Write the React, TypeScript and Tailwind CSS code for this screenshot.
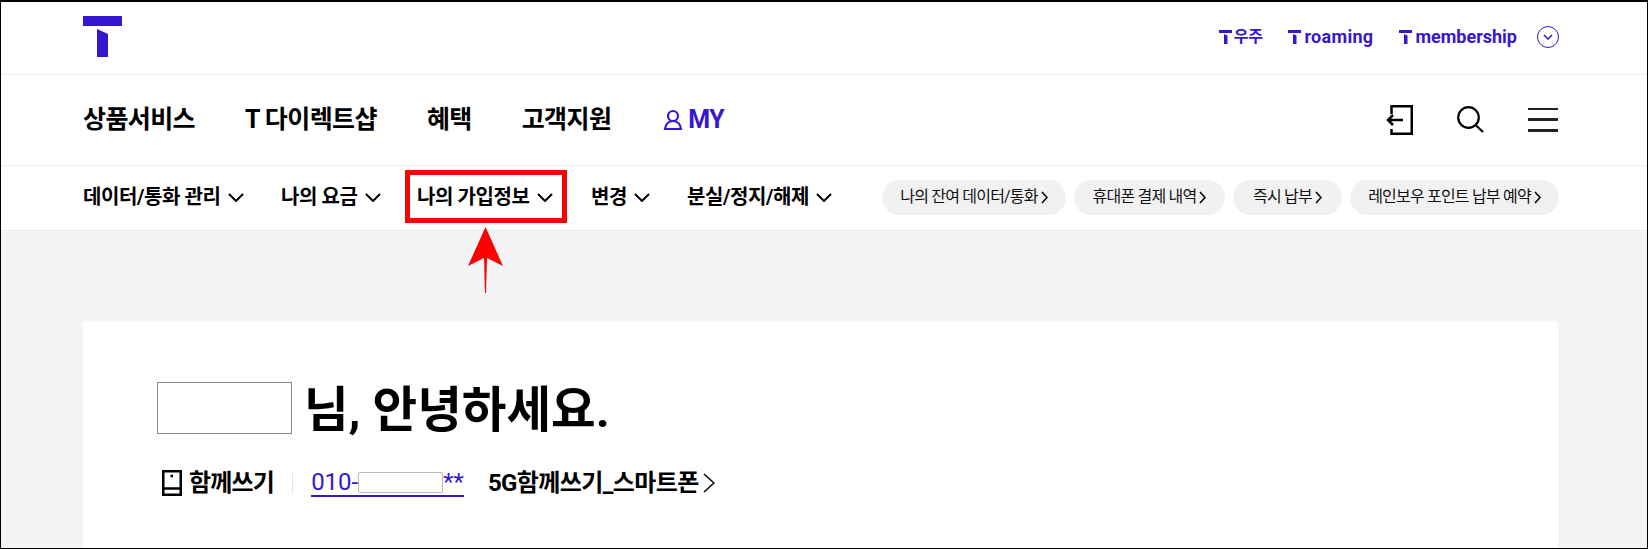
const fontStack = "font-['Roboto','Noto_Sans_CJK_KR',sans-serif]";

const mainNav = ["상품서비스", "T 다이렉트샵", "혜택", "고객지원"];

const subNav = [
  { label: "데이터/통화 관리", width: "w-[198px]" },
  { label: "나의 요금", width: "w-[136px]" },
  { label: "나의 가입정보", width: "w-[174px]" },
  { label: "변경", width: "w-[96px]" },
  { label: "분실/정지/해제", width: "w-auto" },
];

const pills = [
  { label: "나의 잔여 데이터/통화", width: "w-[184px]" },
  { label: "휴대폰 결제 내역", width: "w-[151px]" },
  { label: "즉시 납부", width: "w-[109px]" },
  { label: "레인보우 포인트 납부 예약", width: "w-[209px]" },
];

const TLogo = () => (
  <svg width="40" height="42" viewBox="0 0 40 42" className="block">
    <path d="M0 0H39V10H0Z" fill="#3617ce" />
    <path d="M14 13L25 18V41H14Z" fill="#3617ce" />
  </svg>
);

const MiniT = () => (
  <svg width="13" height="14" viewBox="0 0 13 14" className="shrink-0">
    <path d="M0 0H13V3H0Z" fill="#3617ce" />
    <path d="M5 4L8.500 5.500V14H5Z" fill="#3617ce" />
  </svg>
);

const LoginIcon = () => (
  <svg width="27" height="30" viewBox="0 0 27 30" fill="none" stroke="#000" strokeWidth="2.500" className="block">
    <path d="M5.500 9V1.250H25.750V28.750H5.500V24" />
    <path d="M17 15H2M7 10L2 15L7 20" />
  </svg>
);

const SearchIcon = () => (
  <svg width="27" height="27" viewBox="0 0 27 27" fill="none" stroke="#000" strokeWidth="2.200" className="block">
    <circle cx="11.500" cy="11.500" r="10.300" />
    <path d="M18 18.500L26 26" />
  </svg>
);

const PhoneIcon = () => (
  <svg width="20" height="26" viewBox="0 0 20 26" fill="none" stroke="#000" strokeWidth="2.500" className="block shrink-0">
    <rect x="1.250" y="1.250" width="17.500" height="23.500" />
    <path d="M1 18.500H19" />
    <path d="M8.500 6H11" />
  </svg>
);

const DownChevron = () => (
  <svg width="16" height="9" viewBox="0 0 16 9" fill="none" stroke="#000" strokeWidth="2" className="shrink-0">
    <path d="M1 1L8 8L15 1" />
  </svg>
);

const RightChevron = ({ w, h }: { w: number; h: number }) => (
  <svg width={w} height={h} viewBox={`0 0 ${w} ${h}`} fill="none" stroke="#000" strokeWidth="1.500" className="shrink-0">
    <path d={`M1 1L${w - 1} ${h / 2}L1 ${h - 1}`} />
  </svg>
);

export default function App() {
  return (
    <div className={`${fontStack} relative h-[549px] w-[1648px] overflow-hidden border-2 border-b-[1px] border-black border-r-[1px] border-l-[1px] bg-[#f4f4f6] text-black`}>
      {/* Top bar */}
      <div className="flex h-[73px] items-start justify-between border-b border-[#ededed] bg-white pl-[82px] pr-[88px]">
        <div className="pt-[14px]">
          <TLogo />
        </div>
        <div className="flex items-center gap-[26px] pt-[20px] text-[18px] font-bold leading-[30px] text-[#3617ce]">
          <a className="flex items-center gap-[2px] text-[16px] tracking-[-0.4px]"><MiniT />우주</a>
          <a className="flex items-center gap-[3px] tracking-[0.3px]"><MiniT />roaming</a>
          <a className="flex items-center gap-[3px]"><MiniT />membership</a>
          <span className="-ml-[6px] flex h-[22px] w-[22px] items-center justify-center rounded-full border border-[#3617ce]">
            <svg width="10" height="6" viewBox="0 0 10 6" fill="none" stroke="#3617ce" strokeWidth="1.500">
              <path d="M1 1L5 5L9 1" />
            </svg>
          </span>
        </div>
      </div>

      {/* Main nav */}
      <div className="flex h-[91px] items-center justify-between border-b border-[#ededed] bg-white pb-[1px] pl-[82px] pr-[89px]">
        <div className="flex items-center gap-[50px] text-[25px] font-bold tracking-[-0.6px]">
          {mainNav.map((item) => (
            <span key={item}>{item}</span>
          ))}
          <span className="ml-[2px] flex items-center gap-[5px] text-[#3617ce]">
            <svg width="20" height="22" viewBox="0 0 20 22" fill="none" stroke="#3617ce" strokeWidth="2.200">
              <circle cx="10" cy="7" r="5" />
              <path d="M10 12C5 12 2.500 16 2 20H18C17.500 16 15 12 10 12Z" />
            </svg>
            MY
          </span>
        </div>
        <div className="flex items-center gap-[44px]">
          <LoginIcon />
          <SearchIcon />
          <div className="flex w-[30px] flex-col gap-[8.250px]">
            <div className="h-[2.500px] bg-[#222]" />
            <div className="h-[2.500px] bg-[#222]" />
            <div className="h-[2.500px] bg-[#222]" />
          </div>
        </div>
      </div>

      {/* Sub nav */}
      <div className="flex h-[65px] items-center justify-between border-b border-[#ebebeb] bg-white pb-[2px] pl-[82px] pr-[88px]">
        <div className="flex items-center text-[20px] font-bold tracking-[-0.4px]">
          {subNav.map((item) => (
            <span key={item.label} className={`flex items-center gap-[7px] ${item.width}`}>
              {item.label}
              <DownChevron />
            </span>
          ))}
        </div>
        <div className="flex items-center gap-[8px] text-[16px] tracking-[-0.8px]">
          {pills.map((pill) => (
            <span key={pill.label} className={`flex h-[35px] items-center justify-center gap-[3px] rounded-full bg-[#f1f1f1] text-[#111] ${pill.width}`}>
              {pill.label}
              <RightChevron w={7} h={13} />
            </span>
          ))}
        </div>
      </div>

      {/* Card */}
      <div className="ml-[82px] mr-[89px] mt-[90px] h-[300px] rounded-t-[4px] bg-white pl-[74px] pt-[61px]">
        <div className="flex h-[52px] items-start gap-[12px]">
          <div className="h-[52px] w-[135px] border border-[#8a8a8a] bg-white" />
          <h1 className="mt-[3px] text-[48.500px] font-bold leading-[52px]">님, 안녕하세요.</h1>
        </div>
        <div className="mt-[34px] flex items-center text-[24px] font-bold leading-[30px] tracking-[-0.6px]">
          <span className="ml-[5px] flex items-center gap-[7px] tracking-[-0.8px]">
            <PhoneIcon />
            함께쓰기
          </span>
          <span className="ml-[18px] h-[20px] w-px bg-[#e5e5e5]" />
          <a className="ml-[18px] flex items-center border-b-2 border-[#3617ce] font-normal leading-[26px] tracking-normal text-[#3617ce]">
            010-
            <span className="h-[21px] w-[85px] rounded-[2px] border border-[#bbb] bg-white" />
            **
          </a>
          <span className="ml-[24px] flex items-center gap-[4px]">
            5G함께쓰기_스마트폰
            <RightChevron w={12} h={20} />
          </span>
        </div>
      </div>

      {/* Annotation: red box and arrow */}
      <div className="absolute left-[404px] top-[168px] h-[53px] w-[162px] border-[5px] border-[#ff0000]" />
      <svg className="absolute left-[465px] top-[225px]" width="40" height="70" viewBox="0 0 40 70">
        <path d="M19.500 0L37 39L21 31L20 66H19L18 31L2 39Z" fill="#ff0000" />
      </svg>
    </div>
  );
}
